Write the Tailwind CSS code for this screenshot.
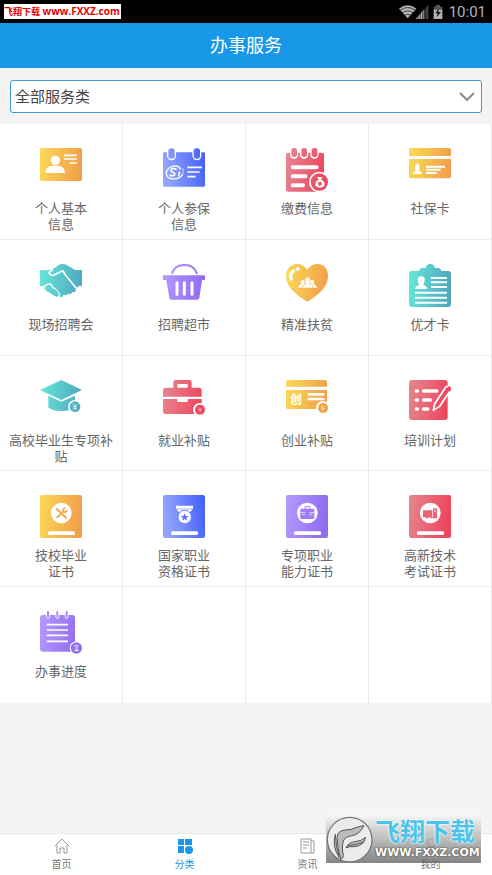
<!DOCTYPE html>
<html lang="zh-CN">

<head>
    <meta charset="UTF-8">
    <meta name="viewport" content="width=device-width, initial-scale=1.0">
    <title>办事服务</title>
    <script src="https://cdn.jsdelivr.net/npm/@tailwindcss/browser@4"></script>
</head>

<body class="bg-[#f4f4f4] min-h-screen flex flex-col relative font-['Roboto','Noto_Sans_CJK_SC',sans-serif] text-[#666]">

    <!-- Shared gradients and shapes -->
    <svg class="absolute w-0 h-0" aria-hidden="true">
        <defs>
            <linearGradient id="yellow" gradientUnits="userSpaceOnUse" x1="0" y1="0" x2="126" y2="20"><stop stop-color="#fadb55"/><stop offset="1" stop-color="#f2a04b"/></linearGradient>
            <linearGradient id="blue" gradientUnits="userSpaceOnUse" x1="0" y1="20" x2="126" y2="0"><stop stop-color="#93a4fb"/><stop offset="1" stop-color="#405efb"/></linearGradient>
            <linearGradient id="red" gradientUnits="userSpaceOnUse" x1="0" y1="0" x2="126" y2="20"><stop stop-color="#e58791"/><stop offset="1" stop-color="#ef455d"/></linearGradient>
            <linearGradient id="teal" gradientUnits="userSpaceOnUse" x1="0" y1="0" x2="126" y2="10"><stop stop-color="#66e6da"/><stop offset="1" stop-color="#4fa9bf"/></linearGradient>
            <linearGradient id="purple" gradientUnits="userSpaceOnUse" x1="0" y1="0" x2="126" y2="20"><stop stop-color="#b49bfd"/><stop offset="1" stop-color="#916cf2"/></linearGradient>
            <path id="person" d="M0 31Q0 23 9 21Q7 17 7 9Q7 0 14 0Q21 0 21 9Q21 17 19 21Q28 23 28 31Z"/>
        </defs>
    </svg>

    <!-- Status bar -->
    <div class="bg-black h-[23px] flex items-center justify-between pl-1 pr-[6px]">
        <p class="bg-white text-[#e00000] font-bold text-[10px] leading-[14px] w-[117px] whitespace-nowrap font-['Open_Sans','Noto_Sans_CJK_SC',sans-serif]"><span class="text-[9px]">飞翔下载</span> www.FXXZ.com</p>
        <div class="flex items-center text-[#b4b4b4]">
            <svg class="w-[44px] h-[14px]" viewBox="0 0 132 42">
                <path d="M0 11Q26 -9 52 11L26 40Z" fill="#b4b4b4"/>
                <path d="M3 16Q26 -1 49 16M9 24Q26 11 43 24M16 31Q26 24 36 31" fill="none" stroke="#000" stroke-width="2"/>
                <path d="M88 0V42H50Z" fill="#444"/>
                <path d="M74 14V42H50Z" fill="#b4b4b4"/>
                <path d="M57 30V42M64 24V42M71 18V42M79 8V42" stroke="#000" stroke-width="2"/>
                <path d="M104 5H110V0H123V5H130V20H104Z" fill="#555"/>
                <path d="M104 14H130V42H104Z" fill="#b4b4b4"/>
                <path d="M120 10L109 25H116L113 37L126 21H118Z" fill="#111"/>
            </svg>
            <span class="ml-[6px] text-[15px] leading-5">10:01</span>
        </div>
    </div>

    <header class="bg-[#1998e7] h-[45px] flex items-center justify-center">
        <h1 class="text-white text-lg">办事服务</h1>
    </header>

    <!-- Category filter -->
    <div class="px-[10px] pt-3 pb-[11px]">
        <div class="relative">
            <select aria-label="服务类别" class="block w-full h-[33px] appearance-none bg-white border border-[#3b97d6] rounded-[3px] pl-1 pt-[2px] text-[15px] text-[#444]">
                <option>全部服务类</option>
            </select>
            <svg class="absolute right-[7px] top-[12px] w-4 h-[9px] pointer-events-none" viewBox="0 0 16 9" fill="none" stroke="#8a8a8a" stroke-width="2"><path d="M1 1L8 8L15 1"/></svg>
        </div>
    </div>

    <!-- Services -->
    <main class="grid grid-cols-4 grid-rows-5 min-h-[579px] bg-white text-[13px] leading-4 text-center *:border-r *:border-b *:border-[#ececec] *:flex *:flex-col *:items-center *:gap-[9px] *:pt-6 *:px-2">
        <a href="#">
            <svg class="w-[42px] h-11" viewBox="0 0 126 132">
                <rect width="126" height="99" rx="5" fill="url(#yellow)"/>
                <g fill="#fff"><circle cx="46" cy="37" r="14"/><path d="M16 75Q16 54 38 53H54Q75 55 75 75Z"/></g>
                <path d="M72 22H110M72 33H110M88 45H110" stroke="#fff" stroke-width="5"/>
            </svg>
            <span>个人基本<br>信息</span>
        </a>
        <a href="#">
            <svg class="w-[42px] h-11" viewBox="0 0 126 132">
                <rect y="13" width="126" height="103" rx="4" fill="url(#blue)"/>
                <path d="M12 10H39V24Q37 37 26 37T12 24ZM88 10H115V24Q113 37 102 37T88 24Z" fill="#fff"/>
                <g fill="url(#blue)"><rect x="16" y="1" width="19" height="31" rx="8"/><rect x="92" y="1" width="19" height="31" rx="8"/></g>
                <path d="M52 59Q40 50 24 57Q8 65 10 79Q14 92 32 93Q50 93 59 80" fill="none" stroke="#fff" stroke-width="4"/>
                <path d="M59 60Q64 72 57 83" fill="none" stroke="#fff" stroke-width="2"/>
                <path d="M41 64Q24 59 24 67C24 75 38 73 35 80Q31 86 20 81M50 70L47 85" fill="none" stroke="#fff" stroke-width="5"/>
                <circle cx="51" cy="62" r="3" fill="#fff"/>
                <path d="M73 58H117M73 72H110M73 86H98" stroke="#fff" stroke-width="5"/>
            </svg>
            <span>个人参保<br>信息</span>
        </a>
        <a href="#">
            <svg class="w-[42px] h-11" viewBox="0 0 126 132">
                <rect y="14" width="114" height="117" rx="6" fill="url(#red)"/>
                <path d="M12 10H37V20Q35 32 24 32T12 20ZM42 10H67V20Q65 32 54 32T42 20ZM73 10H98V20Q96 32 85 32T73 20Z" fill="#fff"/>
                <g fill="url(#red)"><rect x="16" width="17" height="27" rx="8"/><rect x="46" width="17" height="27" rx="8"/><rect x="77" width="17" height="27" rx="8"/></g>
                <path d="M20 58H92M20 85H58M20 112H51" stroke="#fff" stroke-width="12" stroke-linecap="round"/>
                <circle cx="100" cy="102" r="31" fill="#fff"/><circle cx="100" cy="102" r="26" fill="url(#red)"/>
                <path d="M92 87H110L105 94Q116 101 116 109Q115 119 102 119Q88 119 88 109Q88 101 98 94Z" fill="#fff"/>
                <circle cx="102" cy="107" r="6" fill="#ee5368"/>
            </svg>
            <span>缴费信息</span>
        </a>
        <a href="#">
            <svg class="w-[42px] h-11" viewBox="0 0 126 132">
                <path d="M0 24V6Q0 0 6 0H120Q126 0 126 6V24ZM0 33H126V85Q126 91 120 91H6Q0 91 0 85Z" fill="url(#yellow)"/>
                <use href="#person" x="11" y="47" fill="#fff"/>
                <path d="M51 56H108M51 65H95M51 75H83" stroke="#fff" stroke-width="6"/>
            </svg>
            <span>社保卡</span>
        </a>

        <a href="#">
            <svg class="w-[42px] h-11" viewBox="0 0 126 132">
                <path d="M0 19H22L36 17L56 3Q68 -3 82 4L105 18H126V65H116L108 77L104 85L97 84L92 91L84 89L79 94L71 92L66 99L57 99L14 66H0Z" fill="url(#teal)"/>
                <path d="M39 17L27 25Q29 35 41 34L54 27L68 20L76 33L111 75" fill="none" stroke="#fff" stroke-width="5" stroke-linejoin="round"/>
                <path d="M0 68L12 66Q17 58 28 58Q35 58 40 69Q51 74 60 90V100H0Z" fill="#fff"/>
                <path d="M13 72Q17 63 26 62Q35 62 37 73Q50 76 55 88Q60 97 50 98Q43 97 38 92L18 80Z" fill="url(#teal)"/>
            </svg>
            <span>现场招聘会</span>
        </a>
        <a href="#">
            <svg class="w-[42px] h-11" viewBox="0 0 126 132">
                <path d="M27 30Q33 3 64 3Q95 3 102 30" fill="none" stroke="url(#purple)" stroke-width="6"/>
                <path d="M0 34H126V48H117L109 102Q108 107 102 107H25Q20 107 19 102L10 48H0Z" fill="url(#purple)"/>
                <path d="M42 56V91M64 56V91M87 56V91" stroke="#fff" stroke-width="9" stroke-linecap="round"/>
            </svg>
            <span>招聘超市</span>
        </a>
        <a href="#">
            <svg class="w-[42px] h-11" viewBox="0 0 126 132">
                <path d="M64 113C22 88 0 64 0 36C0 12 16 0 34 0C48 0 58 8 64 18C70 8 80 0 94 0C112 0 126 12 126 36C126 64 106 88 64 113Z" fill="url(#yellow)"/>
                <path d="M22 21Q9 30 16 45" fill="none" stroke="#fff" stroke-width="10" stroke-linecap="round"/>
                <circle cx="35" cy="15" r="6" fill="#fff"/>
                <g fill="#fff"><use href="#person" x="51" y="40"/><path d="M36 71Q37 63 46 61Q41 48 51 48Q59 49 55 60L50 71ZM93 71Q92 63 83 61Q88 48 78 48Q70 49 74 60L79 71Z"/></g>
                <path d="M52 61L49 71M78 61L81 71" stroke="#f5b64e" stroke-width="2"/>
            </svg>
            <span>精准扶贫</span>
        </a>
        <a href="#">
            <svg class="w-[42px] h-11" viewBox="0 0 126 132">
                <path d="M9 21H30Q32 12 40 12H50Q53 0 64 0Q75 0 78 12H87Q95 12 97 21H117Q126 21 126 30V120Q126 129 117 129H9Q0 129 0 120V30Q0 21 9 21Z" fill="url(#teal)"/>
                <path d="M18 75Q18 67 30 62Q26 57 26 46Q27 37 37 37Q47 37 47 46Q47 57 43 62Q55 67 55 75Z" fill="#fff"/>
                <path d="M66 42H114M66 55H114M66 69H114M18 86H114M18 101H114M18 116H114" stroke="#fff" stroke-width="6"/>
            </svg>
            <span>优才卡</span>
        </a>

        <a href="#">
            <svg class="w-[42px] h-11" viewBox="0 0 126 132">
                <path d="M0 30L64 0L126 30L64 60ZM25 47L64 65L105 47V82Q88 94 64 93Q34 93 25 82Z" fill="url(#teal)"/>
                <circle cx="104" cy="80" r="20" fill="#fff"/><circle cx="105" cy="80" r="16" fill="url(#teal)"/>
                <path d="M99 71L105 79L111 71M105 79V91M99 80H111M99 85H111" fill="none" stroke="#fff" stroke-width="2"/>
            </svg>
            <span>高校毕业生专项补贴</span>
        </a>
        <a href="#">
            <svg class="w-[42px] h-11" viewBox="0 0 126 132">
                <path d="M31 23V7Q31 0 38 0H79Q86 0 86 7V23H108Q116 23 116 31V50H0V31Q0 23 8 23ZM43 23H74V12H43ZM0 57H43V66H74V57H116V94Q116 102 108 102H8Q0 102 0 94Z" fill="url(#red)" fill-rule="evenodd"/>
                <circle cx="110" cy="89" r="20" fill="#fff"/><circle cx="111" cy="89" r="15" fill="url(#red)"/>
                <path d="M106 83L111 89L116 83M111 89V97M106 90H116" fill="none" stroke="#ffd5da" stroke-width="2"/>
            </svg>
            <span>就业补贴</span>
        </a>
        <a href="#">
            <svg class="w-[42px] h-11" viewBox="0 0 126 132">
                <path d="M0 20V6Q0 0 6 0H117Q123 0 123 6V20ZM0 30H123V87H6Q0 87 0 81Z" fill="url(#yellow)"/>
                <text x="12" y="72" font-size="36" font-weight="700" fill="#fff">创</text>
                <path d="M68 43H112M68 57H112" stroke="#fff" stroke-width="8" stroke-linecap="round"/>
                <circle cx="110" cy="83" r="20" fill="#fff"/><circle cx="111" cy="84" r="15" fill="url(#yellow)"/>
                <path d="M106 78L111 84L116 78M111 84V92M106 86H116" fill="none" stroke="#ffe9c8" stroke-width="2"/>
            </svg>
            <span>创业补贴</span>
        </a>
        <a href="#">
            <svg class="w-[42px] h-11" viewBox="0 0 126 132">
                <rect width="116" height="120" rx="9" fill="url(#red)"/>
                <path d="M22 33H25M44 33H83M22 60H25M44 60H64M22 87H25M44 87H56" stroke="#fff" stroke-width="11" stroke-linecap="round"/>
                <path d="M73 91L77 71L112 19L127 27L92 79Z" fill="url(#red)" stroke="#fff" stroke-width="5" stroke-linejoin="round"/>
                <path d="M112 28L117 20Q121 17 126 23V30L122 35Z" fill="#ef455d"/>
            </svg>
            <span>培训计划</span>
        </a>

        <a href="#">
            <svg class="w-[42px] h-11" viewBox="0 0 126 132">
                <rect width="126" height="129" rx="6" fill="url(#yellow)"/>
                <circle cx="64" cy="54" r="31" fill="#fff"/><rect x="24" y="109" width="81" height="11" rx="4" fill="#fff"/>
                <path d="M50 42L60 51M67 58L78 68" stroke="#f3ab4c" stroke-width="6" stroke-linecap="round"/>
                <path d="M50 68L73 47" stroke="#f3ab4c" stroke-width="6"/>
                <path d="M76 38Q67 42 71 49T82 46" fill="none" stroke="#f3ab4c" stroke-width="5"/>
            </svg>
            <span>技校毕业<br>证书</span>
        </a>
        <a href="#">
            <svg class="w-[42px] h-11" viewBox="0 0 126 132">
                <rect width="126" height="129" rx="6" fill="url(#blue)"/>
                <rect x="24" y="109" width="81" height="11" rx="4" fill="#fff"/>
                <path d="M39 32H90V41H86V47L76 53H53L43 47V41H39Z" fill="#fff"/>
                <path d="M43 42H86" stroke="#7085fb" stroke-width="2"/>
                <circle cx="65" cy="66" r="20" fill="#fff" stroke="#7085fb" stroke-width="3"/>
                <path d="M65 54L68 63H78L70 68L73 77L65 72L57 77L60 68L52 63H62Z" fill="#5a72fb"/>
            </svg>
            <span>国家职业<br>资格证书</span>
        </a>
        <a href="#">
            <svg class="w-[42px] h-11" viewBox="0 0 126 132">
                <rect width="126" height="129" rx="6" fill="url(#purple)"/>
                <circle cx="64" cy="54" r="31" fill="#fff"/><rect x="24" y="109" width="81" height="11" rx="4" fill="#fff"/>
                <path d="M57 41V35H71V41" fill="none" stroke="#a07df6" stroke-width="3"/>
                <rect x="43" y="41" width="42" height="31" rx="3" fill="#a07df6"/>
                <path d="M43 53H59M69 53H85M49 59H57M71 59H79" stroke="#fff" stroke-width="2"/>
            </svg>
            <span>专项职业<br>能力证书</span>
        </a>
        <a href="#">
            <svg class="w-[42px] h-11" viewBox="0 0 126 132">
                <rect width="126" height="129" rx="6" fill="url(#red)"/>
                <circle cx="64" cy="54" r="31" fill="#fff"/><rect x="24" y="109" width="81" height="11" rx="4" fill="#fff"/>
                <path d="M42 46H70V67H59V70H51V67H42ZM72 40H84V70H64V67H72Z" fill="#ec6375"/>
                <path d="M75 45H81M75 50H81" stroke="#fff" stroke-width="2"/>
            </svg>
            <span>高新技术<br>考试证书</span>
        </a>

        <a href="#" class="border-b-0!">
            <svg class="w-[42px] h-11" viewBox="0 0 126 132">
                <rect y="12" width="105" height="110" rx="9" fill="url(#purple)"/>
                <path d="M24 4V18M52 4V18M80 4V18" stroke="#fff" stroke-width="11" stroke-linecap="round"/>
                <path d="M24 3V18M52 3V18M80 3V18" stroke="#a98bfa" stroke-width="6" stroke-linecap="round"/>
                <path d="M20 41H84M20 57H84M20 73H84M20 91H84" stroke="#fff" stroke-width="5"/>
                <circle cx="109" cy="111" r="20" fill="#fff"/><circle cx="109" cy="111" r="17" fill="url(#purple)"/>
                <path d="M103 103H115L105 119H115M105 104L115 119H103" fill="none" stroke="#fff" stroke-width="2"/>
            </svg>
            <span>办事进度</span>
        </a>
        <div class="border-b-0!"></div>
        <div class="border-b-0!"></div>
        <div class="border-b-0!"></div>
    </main>

    <!-- Tab bar -->
    <nav class="mt-auto h-[42px] grid grid-cols-4 bg-white border-t border-[#e8e8e8] text-[10px] leading-3 text-[#777] *:flex *:flex-col *:items-center *:gap-[5px] *:pt-1">
        <a href="#">
            <svg class="w-4 h-4" viewBox="0 0 16 16" fill="none" stroke="#999"><path d="M1 8L8 1L15 8M3 7V15H6V10H10V15H13V7"/></svg>
            首页
        </a>
        <a href="#" class="text-[#1a98e8]">
            <svg class="w-4 h-4" viewBox="0 0 16 16" fill="#1a98e8"><path d="M1 1H7V7H1ZM8 1H15V7H8ZM1 8H7V15H1Z"/><circle cx="12" cy="12" r="4"/></svg>
            分类
        </a>
        <a href="#">
            <svg class="w-4 h-4" viewBox="0 0 16 16" fill="none" stroke="#999"><path d="M1 1H11V15H1ZM11 3H14V15H11M3 4H9M3 7H9M3 10H7"/></svg>
            资讯
        </a>
        <a href="#">
            <svg class="w-4 h-4" viewBox="0 0 16 16" fill="none" stroke="#999"><circle cx="8" cy="5" r="4"/><path d="M1 15Q2 9 8 9T15 15"/></svg>
            我的
        </a>
    </nav>

    <!-- Site badge -->
    <div class="absolute right-[11px] bottom-3 w-[155px] h-12 flex items-center gap-[2px] bg-linear-to-b from-[#f8f8f8]/70 to-[#666]/80">
        <svg class="w-[47px] h-[47px] shrink-0" viewBox="0 0 141 141">
            <circle cx="71" cy="71" r="67" fill="#ececec" stroke="#777" stroke-width="4"/>
            <g fill="#bbb" stroke="#555" stroke-width="3" stroke-linejoin="round">
                <path d="M114 29L91 34Q78 42 58 42Q33 43 33 68Q35 98 44 130Q52 128 52 118Q46 91 53 72Q60 61 77 59Q99 58 114 29Z"/>
                <path d="M119 64Q106 76 86 77Q67 79 60 96Q70 90 84 92Q113 91 119 64Z"/>
                <path d="M28 55Q17 92 40 125Q29 91 28 55Z"/>
            </g>
            <path d="M64 89Q92 87 112 78" fill="none" stroke="#555" stroke-width="3"/>
        </svg>
        <div class="flex flex-col whitespace-nowrap font-bold">
            <span class="text-[25px] leading-7 text-[#4cc3ea] [text-shadow:0_0_2px_white,0_0_2px_white]">飞翔下载</span>
            <span class="text-[11px] leading-3 text-white font-['DejaVu_Sans',sans-serif] [text-shadow:0_0_2px_#444,0_0_1px_#444]">WWW.FXXZ.COM</span>
        </div>
    </div>

</body>
</html>
